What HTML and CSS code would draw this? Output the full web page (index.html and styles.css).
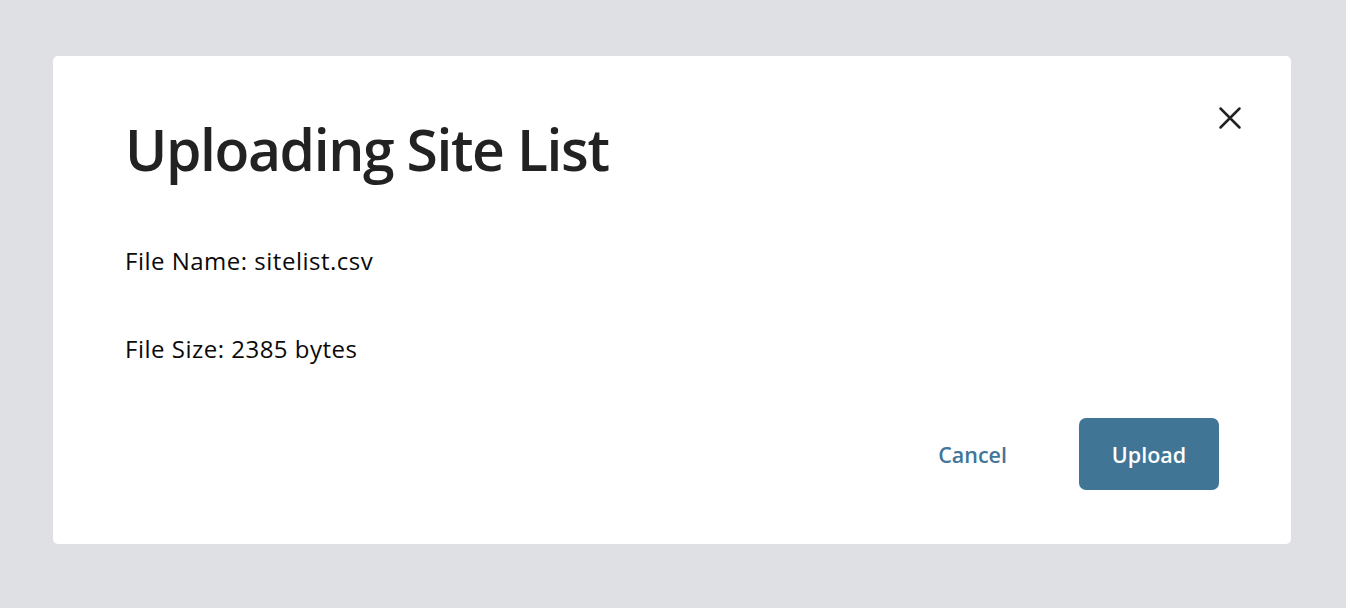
FILE: index.html
```html
<!DOCTYPE html>
<html lang="en">
<head>
<meta charset="utf-8">
<title>Uploading Site List</title>
<link rel="stylesheet" href="styles.css">
</head>
<body>
<div class="dialog" role="dialog" aria-labelledby="dlg-title">
  <button class="close" aria-label="Close">
    <svg width="24" height="24" viewBox="0 0 24 24"><path d="M2.5 2.5 L21.5 21.5 M21.5 2.5 L2.5 21.5" stroke="#222" stroke-width="2.5" stroke-linecap="round" fill="none"/></svg>
  </button>
  <h1 id="dlg-title" class="title">Uploading Site List</h1>
  <p class="info">File Name: sitelist.csv</p>
  <p class="info">File Size: 2385 bytes</p>
  <div class="actions">
    <button class="btn-cancel">Cancel</button>
    <button class="btn-upload">Upload</button>
  </div>
</div>
</body>
</html>
```
FILE: styles.css
```css
html, body {
  margin: 0;
  padding: 0;
}
body {
  background: #dfe0e4;
  font-family: "Open Sans", "Noto Sans", sans-serif;
  width: 1346px;
  height: 608px;
  padding: 56px 0 0 53px;
  box-sizing: border-box;
}
.dialog {
  position: relative;
  width: 1238px;
  height: 488px;
  background: #fff;
  border-radius: 5px;
  box-sizing: border-box;
  padding: 65px 72px 0 72px;
  display: flex;
  flex-direction: column;
}
.close {
  position: absolute;
  top: 50px;
  right: 49px;
  width: 24px;
  height: 24px;
  padding: 0;
  border: 0;
  background: none;
  display: flex;
}
.title {
  margin: 0;
  font-size: 57px;
  font-weight: 600;
  line-height: 1;
  letter-spacing: -1.4px;
  color: #222;
}
.info {
  margin: 0;
  font-size: 24px;
  letter-spacing: 0.5px;
  color: #0a0a0a;
  line-height: 1;
}
.title + .info { margin-top: 71px; }
.info + .info { margin-top: 64px; }
.actions {
  margin-top: auto;
  margin-bottom: 54px;
  display: flex;
  justify-content: flex-end;
  align-items: center;
  gap: 72px;
}
.btn-cancel {
  border: 0;
  background: none;
  font-family: inherit;
  font-size: 21.5px;
  font-weight: 600;
  color: #41759a;
  padding: 0;
}
.btn-upload {
  width: 140px;
  height: 72px;
  border: 0;
  border-radius: 7px;
  background: #417596;
  color: #fff;
  font-family: inherit;
  font-size: 21.5px;
  font-weight: 600;
}
```
